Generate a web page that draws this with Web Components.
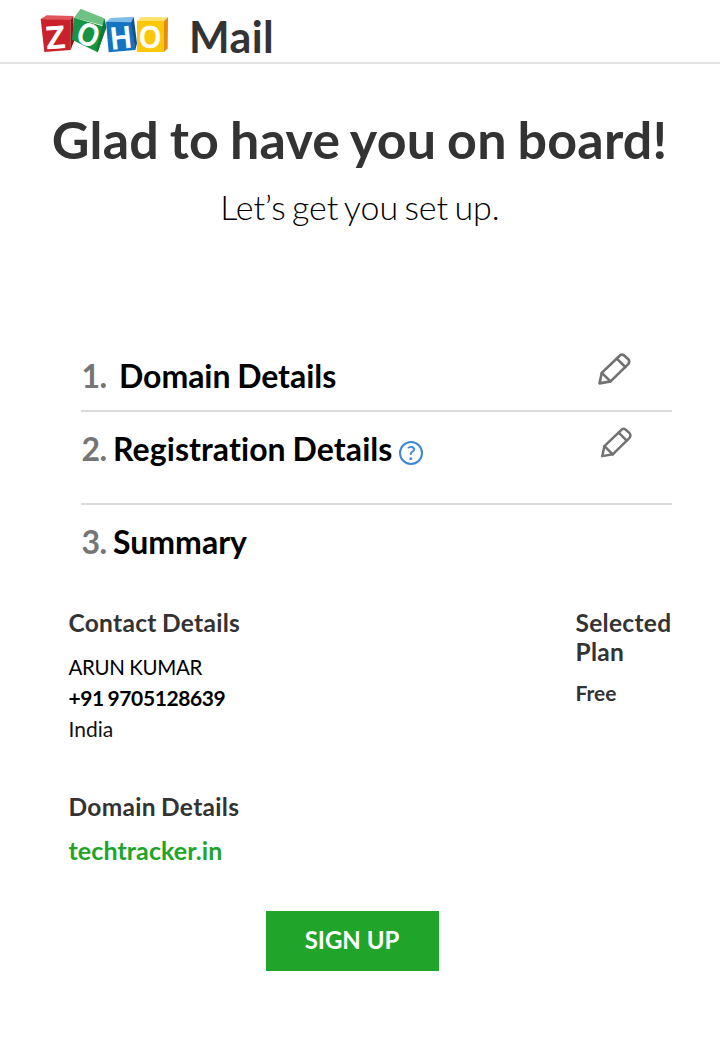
<!DOCTYPE html>
<html lang="en">
<head>
<meta charset="utf-8">
<title>Zoho Mail</title>
<style>
body { margin: 0; background: #fff; color: #000; font-family: Lato, sans-serif; }
</style>
</head>
<body>
<signup-page></signup-page>
<script>
const define = (name, html) => {
  const tpl = document.createElement('template');
  tpl.innerHTML = html;
  customElements.define(name, class extends HTMLElement {
    constructor() {
      super();
      this.attachShadow({ mode: 'open' }).append(tpl.content.cloneNode(true));
    }
  });
};

define('zoho-logo', `
<style>
:host { display: block; width: 150px; height: 62px; }
svg { display: block; }
text { font-family: "Open Sans", sans-serif; font-weight: 600; fill: #fff; stroke: #fff; stroke-width: 2; text-anchor: middle; }
</style>
<svg width="150" height="62" viewBox="0 0 450 186" aria-label="Zoho">
  <path d="M32 57L50 46L130 48L122 62Z" fill="#e0565a"/>
  <path d="M32 57L122 60L122 150L43 156Z" fill="#c9202c"/>
  <path d="M122 60L130 48L132 124L122 150Z" fill="#8d1219"/>
  <path d="M132 53L152 26L223 55L229 79Z" fill="#6fc184"/>
  <path d="M132 53L229 82L203 157L126 119Z" fill="#169443"/>
  <path d="M223 55L229 82L203 157L199 150Z" fill="#0b7934"/>
  <path d="M228 65L242 54L311 50L303 68Z" fill="#7fbce9"/>
  <path d="M228 65L305 67L316 150L236 157Z" fill="#1474c0"/>
  <path d="M303 68L311 50L321 130L316 150Z" fill="#0b5090"/>
  <path d="M321 63L334 51L414 52L402 64Z" fill="#ffe26a"/>
  <path d="M321 63L402 63L402 156L321 156Z" fill="#fbc70c"/>
  <path d="M402 63L414 52L413 145L402 156Z" fill="#e78a12"/>
  <text transform="translate(79 145) rotate(-4) scale(1.08 1)" font-size="92">Z</text>
  <text transform="translate(164 134) rotate(20) scale(.92 1)" font-size="90">O</text>
  <text transform="translate(276 145) rotate(-6) scale(.98 1)" font-size="90">H</text>
  <text transform="translate(360 144) scale(.95 1)" font-size="91">O</text>
</svg>`);

define('app-header', `
<style>
:host { display: flex; box-sizing: border-box; height: 64px; padding-left: 30px; border-bottom: 2px solid #e2e2e2; }
.name { margin: 10px 0 0 9px; font-size: 43px; line-height: 54px; font-weight: 700; letter-spacing: .4px; color: #333; }
</style>
<zoho-logo></zoho-logo><div class="name"><slot></slot></div>`);

define('welcome-hero', `
<style>
:host { display: block; padding-top: 45px; text-align: center; white-space: nowrap; }
.title { font-size: 52px; line-height: 60px; font-weight: 700; letter-spacing: .2px; word-spacing: -2px; position: relative; left: -.5px; color: #333; }
.sub { margin-top: 18px; font-size: 34px; line-height: 40px; font-weight: 300; letter-spacing: -.05px; word-spacing: -2.8px; }
</style>
<div class="title"><slot name="title"></slot></div><div class="sub"><slot></slot></div>`);

define('pencil-icon', `
<style>:host { display: block; width: 33px; height: 32px; } svg { display: block; width: 100%; height: 100%; }</style>
<svg viewBox="0 0 100 98" fill="none" stroke="#717171" stroke-width="8" stroke-linejoin="round" stroke-linecap="round">
  <path d="M4 93L11 61L65 9Q71 2 79 7L92 19Q98 26 92 34L38 87Z"/>
  <path d="M57 17L83 43M11 61L38 87"/>
</svg>`);

define('help-icon', `
<style>
:host { display: block; width: 24px; height: 24px; }
svg { display: block; }
text { font: 600 20px Lato, sans-serif; fill: #3b88d8; text-anchor: middle; }
</style>
<svg width="24" height="24" viewBox="0 0 24 24">
  <circle cx="12" cy="12" r="11" fill="none" stroke="#3b88d8" stroke-width="2"/>
  <text x="12" y="19">?</text>
</svg>`);

define('setup-step', `
<style>
:host { display: flex; box-sizing: border-box; align-items: flex-start; font-size: 32px; line-height: 40px; font-weight: 700; white-space: nowrap; }
.num { width: var(--num, 31.5px); padding-left: .5px; color: #757575; letter-spacing: -.6px; }
.num, .label { padding-top: 1px; }
.edit { margin-left: auto; }
</style>
<span class="num"><slot name="num"></slot></span><span class="label"><slot></slot></span><slot name="help"></slot><span class="edit"><slot name="edit"></slot></span>`);

define('info-block', `
<style>
:host { display: block; color: #333; font-size: 21px; line-height: 31px; }
.head { font-size: 24.5px; line-height: 29px; font-weight: 700; letter-spacing: .3px; word-spacing: -1px; }
.body { margin-top: 15px; }
</style>
<div class="head"><slot name="head"></slot></div><div class="body"><slot></slot></div>`);

define('action-button', `
<style>
:host { display: block; }
button { display: block; width: 173px; height: 60px; padding: 0 1px 3px 0; border: 0; background: #20a42a; color: #fff; font: 700 24px/30px Lato, sans-serif; }
</style>
<button><slot></slot></button>`);

define('signup-page', `
<style>
:host { display: block; height: 1050px; overflow: hidden; }
.steps { margin: 128px 48px 0 81px; }
setup-step { border-bottom: 2px solid #dadada; }
.s1 { height: 57px; --num: 37.5px; word-spacing: -1px; letter-spacing: -.05px; }
.s2 { height: 93px; padding-top: 16px; word-spacing: -1px; letter-spacing: .08px; }
.s3 { height: 103px; padding-top: 16px; border: 0; }
help-icon { margin: 13px 0 0 6.5px; }
.s1 pencil-icon { margin: -2px 41px 0 0; }
.s2 pencil-icon { width: 31px; height: 31px; margin: -1px 40px 0 0; }
.summary { display: grid; grid-template-columns: 507px 100px; padding-left: 68.5px; }
.person, .phone, .country { display: block; color: #000; }
.person { font-size: 20.5px; letter-spacing: -.35px; }
.phone { margin: -1px 0 0; font-weight: 700; letter-spacing: -.4px; word-spacing: -1px; }
.country { color: #111; }
.free { display: block; margin-top: -4px; font-weight: 700; }
.domain { grid-column: 1 / 3; margin-top: 48px; }
.link { display: block; font-size: 25px; line-height: 29px; font-weight: 700; letter-spacing: .1px; color: #20a42a; }
action-button { margin: 46px 0 0 266px; }
</style>
<app-header>Mail</app-header>
<welcome-hero><span slot="title">Glad to have you on board!</span>Let’s get you set up.</welcome-hero>
<div class="steps">
  <setup-step class="s1"><span slot="num">1.</span>Domain Details<pencil-icon slot="edit"></pencil-icon></setup-step>
  <setup-step class="s2"><span slot="num">2.</span>Registration Details<help-icon slot="help"></help-icon><pencil-icon slot="edit"></pencil-icon></setup-step>
  <setup-step class="s3"><span slot="num">3.</span>Summary</setup-step>
</div>
<div class="summary">
  <info-block><span slot="head">Contact Details</span><span class="person">ARUN KUMAR</span><span class="phone">+91 9705128639</span><span class="country">India</span></info-block>
  <info-block class="plan"><span slot="head">Selected Plan</span><span class="free">Free</span></info-block>
  <info-block class="domain"><span slot="head">Domain Details</span><span class="link">techtracker.in</span></info-block>
</div>
<action-button>SIGN UP</action-button>`);
</script>
</body>
</html>
